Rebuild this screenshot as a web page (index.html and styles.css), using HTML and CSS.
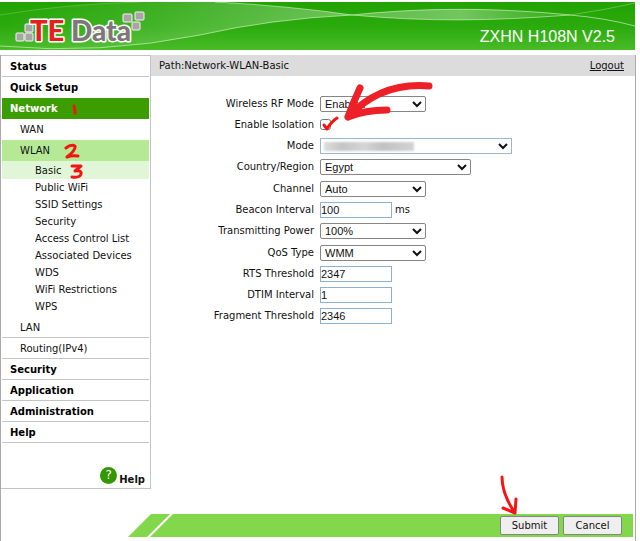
FILE: index.html
```html
<!DOCTYPE html>
<html lang="en">
<head>
<meta charset="utf-8">
<title>ZXHN H108N V2.5</title>
<link rel="stylesheet" href="styles.css">
</head>
<body>
<div class="page">
  <header class="banner">
    <svg class="waves" viewBox="0 0 635 48" preserveAspectRatio="none" aria-hidden="true">
      <defs>
        <linearGradient id="base" x1="0" y1="0" x2="0" y2="1"><stop offset="0" stop-color="#22a303"/><stop offset=".5" stop-color="#2aaa0c"/><stop offset="1" stop-color="#49bb28"/></linearGradient>
        <linearGradient id="mist" x1="0" y1="0" x2="1" y2="0"><stop offset="0" stop-color="#fff" stop-opacity="0"/><stop offset=".45" stop-color="#fff" stop-opacity=".12"/><stop offset="1" stop-color="#fff" stop-opacity=".33"/></linearGradient>
        <linearGradient id="lens" x1="0" y1="0" x2="1" y2="0"><stop offset="0" stop-color="#fff" stop-opacity=".25"/><stop offset=".5" stop-color="#fff" stop-opacity=".35"/><stop offset="1" stop-color="#fff" stop-opacity=".05"/></linearGradient>
      </defs>
      <path fill="url(#base)" d="M0 0H635V48H0Z"/>
      <path fill="url(#mist)" d="M0 13Q65 2 140 0H215Q290 4 352 13Q270 17 200 33Q100 53 0 44Z"/>
      <path fill="url(#lens)" d="M352 13C420 6 490 5 570 13C490 19 430 20 352 13Z"/>
      <g fill="none" stroke="#d2f2c6">
        <path stroke-opacity=".65" d="M0 44Q100 53 200 33Q270 17 352 13C420 6 490 5 570 13Q605 16 635 24"/>
        <path stroke-opacity=".6" d="M215 0Q290 4 352 13C430 20 490 19 570 13"/>
        <path stroke-opacity=".35" d="M570 13Q605 8 635 1"/>
        <path stroke-opacity=".25" d="M0 13Q65 2 140 0"/>
      </g>
    </svg>
    <svg class="logo" width="134" height="36" viewBox="0 0 134 36" role="img" aria-label="TE Data">
      <g fill="#a9a5a7" stroke="#f4f4f4" stroke-width="1">
        <rect x="1" y="22" width="8" height="8" rx="1"/><rect x="10" y="22" width="8" height="8" rx="1"/><rect x="10" y="13" width="8" height="8" rx="1"/>
        <rect x="108" y="3" width="9" height="8" rx="1"/><rect x="120" y="1" width="9" height="8" rx="1"/><rect x="117" y="11" width="8" height="8" rx="1"/>
      </g>
      <text class="logo-te" x="15" y="30">TE</text>
      <text class="logo-data" x="56" y="30">Data</text>
    </svg>
    <h1 class="model">ZXHN H108N V2.5</h1>
  </header>

  <div class="body">
    <aside class="sidebar">
      <nav>
        <a class="item" href="#">Status</a>
        <a class="item plain" href="#">Quick Setup</a>
        <a class="item current" href="#">Network
          <svg class="mark mark-one" width="8" height="14" viewBox="0 0 8 14" aria-hidden="true"><path d="M3 3Q4 7 4 10"/></svg>
        </a>
        <a class="sub plain" href="#">WAN</a>
        <a class="sub plain selected" href="#">WLAN
          <svg class="mark mark-two" width="18" height="17" viewBox="0 0 18 17" aria-hidden="true"><path d="M3 5Q8 1 12 3Q13 7 4 14Q9 12 15 13"/></svg>
        </a>
        <div class="leaves">
          <a class="leaf active" href="#">Basic
            <svg class="mark mark-three" width="16" height="17" viewBox="0 0 16 17" aria-hidden="true"><path d="M3 3L12 3L6 8Q13 7 12 11Q11 15 3 14"/></svg>
          </a>
          <a class="leaf" href="#">Public WiFi</a>
          <a class="leaf" href="#">SSID Settings</a>
          <a class="leaf" href="#">Security</a>
          <a class="leaf" href="#">Access Control List</a>
          <a class="leaf" href="#">Associated Devices</a>
          <a class="leaf" href="#">WDS</a>
          <a class="leaf" href="#">WiFi Restrictions</a>
          <a class="leaf" href="#">WPS</a>
        </div>
        <a class="sub" href="#">LAN</a>
        <a class="sub" href="#">Routing(IPv4)</a>
        <a class="item" href="#">Security</a>
        <a class="item" href="#">Application</a>
        <a class="item" href="#">Administration</a>
        <a class="item" href="#">Help</a>
      </nav>
      <a class="help" href="#"><span class="help-icon">?</span><span>Help</span></a>
    </aside>

    <main class="content">
      <div class="path"><span>Path:Network-WLAN-Basic</span><a href="#">Logout</a></div>
      <form class="settings" id="wlan">
        <label for="rf">Wireless RF Mode</label>
        <div><select id="rf" class="short"><option>Enabled</option></select></div>
        <label for="iso">Enable Isolation</label>
        <div class="check"><input type="checkbox" id="iso">
          <svg class="tick" width="20" height="20" viewBox="0 0 20 20" aria-hidden="true"><path d="M4 11L7 15Q11 8 17 4"/></svg>
          <svg class="arrow" width="98" height="48" viewBox="0 0 98 48" aria-hidden="true"><path d="M88 7Q40 3 7 38M19 9Q12 24 7 38M7 38Q24 31 46 31"/></svg>
        </div>
        <label for="mode">Mode</label>
        <div class="mode"><select id="mode" class="long"><option></option></select><span class="smudge"></span></div>
        <label for="country">Country/Region</label>
        <div><select id="country" class="medium"><option>Egypt</option></select></div>
        <label for="channel">Channel</label>
        <div><select id="channel" class="short"><option>Auto</option></select></div>
        <label for="beacon">Beacon Interval</label>
        <div><input type="text" id="beacon" value="100"><span class="unit">ms</span></div>
        <label for="power">Transmitting Power</label>
        <div><select id="power" class="short"><option>100%</option></select></div>
        <label for="qos">QoS Type</label>
        <div><select id="qos" class="short"><option>WMM</option></select></div>
        <label for="rts">RTS Threshold</label>
        <div><input type="text" id="rts" value="2347"></div>
        <label for="dtim">DTIM Interval</label>
        <div><input type="text" id="dtim" value="1"></div>
        <label for="frag">Fragment Threshold</label>
        <div><input type="text" id="frag" value="2346"></div>
      </form>
    </main>
  </div>

  <footer class="actions">
    <div class="stripe"></div>
    <div class="bar">
      <button type="submit" form="wlan">Submit</button>
      <button type="button">Cancel</button>
      <svg class="pointer" width="24" height="44" viewBox="0 0 24 44" aria-hidden="true"><path d="M4 3Q4 20 17 39M5 34L17 39L18 25"/></svg>
    </div>
  </footer>
</div>
</body>
</html>
```
FILE: styles.css
```css
* { box-sizing: border-box; }

body {
  margin: 0;
  background: #fff;
  color: #111;
  font: 10px/16px "DejaVu Sans", Verdana, sans-serif;
}

a { color: inherit; text-decoration: none; }

.page {
  display: flex;
  flex-direction: column;
  min-height: 100vh;
  margin-right: 4px;
  padding-top: 2px;
}

.banner {
  position: relative;
  display: flex;
  justify-content: space-between;
  height: 48px;
  margin-right: 1px;
}

.waves { position: absolute; width: 100%; height: 100%; }
.logo { position: relative; margin: 9px 0 0 15px; }

.logo text {
  font-family: Lato, sans-serif;
  font-size: 29px;
  font-weight: 900;
  stroke: #fff;
  stroke-width: 3px;
  stroke-linejoin: round;
  paint-order: stroke;
}

.logo .logo-te { fill: #e5211d; }
.logo .logo-data { fill: #7d7779; font-size: 28px; }

.model {
  position: relative;
  align-self: flex-end;
  margin: 0 20px 3px 0;
  color: #fff;
  font: 16px/20px "Liberation Sans", Arial, sans-serif;
}

.body {
  display: flex;
  flex: 1;
  align-items: flex-start;
  margin-top: 5px;
  border-left: 1px solid #aaa;
  border-right: 1px solid #aaa;
}

.sidebar {
  flex: none;
  width: 150px;
  padding: 0 1px;
  border: 1px solid #c4c4c4;
  border-left: 0;
}

.item, .sub, .leaf { position: relative; display: block; }

.item, .sub {
  height: 21px;
  border-bottom: 1px solid #c4c4c4;
  line-height: 21px;
}

.item { padding-left: 8px; font-weight: bold; color: #000; }
.sub { padding-left: 18px; }
.plain { border-bottom-color: transparent; }
.current { background: #3c9d00; border-color: #3c9d00; color: #fff; }
.selected { background: #b6e996; border-color: #b6e996; }
.leaves { padding-bottom: 2px; }
.leaf { padding-left: 33px; line-height: 17px; }
.active { padding-top: 1px; background: #e1f6d6; }

.mark, .tick, .arrow, .pointer {
  position: absolute;
  fill: none;
  stroke: #f51414;
  stroke-width: 3px;
  stroke-linecap: round;
  stroke-linejoin: round;
}

.mark-one { left: 69px; top: 5px; }
.mark-two { left: 61px; top: 3px; }
.mark-three { left: 67px; top: 2px; }

.help {
  display: flex;
  justify-content: flex-end;
  align-items: flex-end;
  gap: 2px;
  height: 45px;
  padding: 0 4px 0 0;
  font-weight: bold;
}

.help-icon {
  width: 17px;
  height: 17px;
  margin-bottom: 4px;
  border-radius: 50%;
  background: #329800;
  color: #fff;
  font: 12px/17px "DejaVu Sans", sans-serif;
  text-align: center;
}

.content { flex: 1; min-width: 0; }

.path {
  display: flex;
  justify-content: space-between;
  padding: 0 11px 0 8px;
  background: #dcdcdc;
  line-height: 21px;
}

.path a { text-decoration: underline; }

.settings {
  display: grid;
  grid-template-columns: 163px 1fr;
  grid-auto-rows: 1fr;
  align-items: center;
  column-gap: 6px;
  height: 234px;
  margin-top: 17px;
}

.settings label { text-align: right; }
.settings div { display: flex; align-items: center; }

select, input[type="text"] {
  height: 16px;
  margin: 0;
  padding: 0;
  background: #fff;
  color: #111;
  font: 11px/14px "Liberation Sans", Arial, sans-serif;
}

select { border: 1px solid #858585; border-radius: 2px; }
.short { width: 106px; }
.medium { width: 151px; }
.long { width: 192px; border-color: #9bb8ca; border-radius: 0; }
input[type="text"] { width: 72px; border: 1px solid #8eb2cd; }
.unit { margin-left: 3px; }

.check { position: relative; }
.check input { width: 11px; height: 11px; margin: 0; }
.settings .tick { left: 0; top: -5px; }
.arrow { left: 21px; top: -40px; stroke: #ed2027; stroke-width: 7px; }

.mode { position: relative; }

.smudge {
  position: absolute;
  left: 4px;
  width: 90px;
  height: 9px;
  background: linear-gradient(90deg, #ddd, #c5c5c5 20%, #d5d5d5 45%, #c2c2c2 65%, #d3d3d3);
  filter: blur(1px);
}

.actions {
  display: flex;
  height: 27px;
  padding: 0 2px 4px 127px;
  border-left: 1px solid #aaa;
  border-right: 1px solid #aaa;
}

.stripe {
  width: 44px;
  margin-right: -22px;
  background: #82d74a;
  clip-path: polygon(23px 0, 42px 0, 19px 100%, 0 100%);
}

.bar {
  position: relative;
  display: flex;
  flex: 1;
  justify-content: flex-end;
  align-items: center;
  gap: 4px;
  padding-right: 11px;
  background: linear-gradient(#82d74a, #82d74a) 23px 0 no-repeat;
}

.bar::before {
  content: "";
  flex: 1;
  align-self: stretch;
  background: #82d74a;
  clip-path: polygon(23px 0, 100% 0, 100% 100%, 0 100%);
}

button {
  width: 59px;
  height: 19px;
  padding: 0;
  border: 1px solid #858585;
  border-radius: 2px;
  background: #efefef;
  color: #111;
  font: 10px/16px "DejaVu Sans", Verdana, sans-serif;
}

.pointer { right: 111px; top: -40px; }
```
